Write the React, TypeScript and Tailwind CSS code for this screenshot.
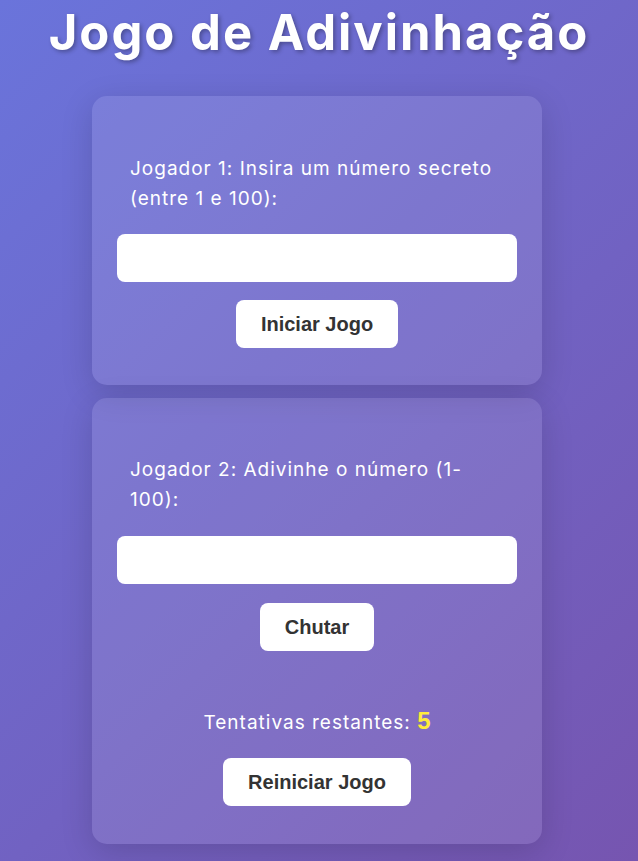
export default function App() {
  return (
    <main className="min-h-[861px] bg-[linear-gradient(135deg,#6a74db_0%,#7655b0_100%)] pb-4 font-['Inter',sans-serif] text-white">
      <h1 className="pt-[1px] text-center text-[49px] font-bold leading-[64px] tracking-[2px] [text-shadow:2px_2px_4px_rgba(0,0,0,0.3)]">
        Jogo de Adivinhação
      </h1>

      <section className="ml-[92px] mt-[31px] w-[450px] rounded-[15px] bg-white/10 px-[25px] pb-[37px] pt-[58px] shadow-[0_8px_32px_rgba(0,0,0,0.15)]">
        <p className="px-[13px] text-[19px] leading-[30px] tracking-[1px]">
          Jogador 1: Insira um número secreto (entre 1 e 100):
        </p>
        <input className="mt-[20px] block h-12 w-full rounded-lg bg-white outline-none" type="number" />
        <div className="mt-[18px] flex justify-center">
          <button className="h-12 w-[162px] rounded-lg bg-white font-['Liberation_Sans',sans-serif] text-[20px] font-bold text-[#333]">
            Iniciar Jogo
          </button>
        </div>
      </section>

      <section className="ml-[92px] mt-[13px] w-[450px] rounded-[15px] bg-white/10 px-[25px] pb-[38px] pt-[57px] shadow-[0_8px_32px_rgba(0,0,0,0.15)]">
        <p className="px-[13px] text-[19px] leading-[30px] tracking-[1px]">
          Jogador 2: Adivinhe o número (1-100):
        </p>
        <input className="mt-[21px] block h-12 w-full rounded-lg bg-white outline-none" type="number" />
        <div className="mt-[19px] flex justify-center">
          <button className="h-12 w-[114px] rounded-lg bg-white font-['Liberation_Sans',sans-serif] text-[20px] font-bold text-[#333]">
            Chutar
          </button>
        </div>
        <p className="mt-[55px] text-center text-[19px] leading-[30px] tracking-[1px]">
          Tentativas restantes:{' '}
          <span className="font-['Liberation_Sans',sans-serif] text-[24px] font-bold tracking-normal text-[#ffeb3b]">5</span>
        </p>
        <div className="mt-[20px] flex justify-center">
          <button className="h-12 w-[188px] rounded-lg bg-white font-['Liberation_Sans',sans-serif] text-[20px] font-bold text-[#333]">
            Reiniciar Jogo
          </button>
        </div>
      </section>
    </main>
  )
}
